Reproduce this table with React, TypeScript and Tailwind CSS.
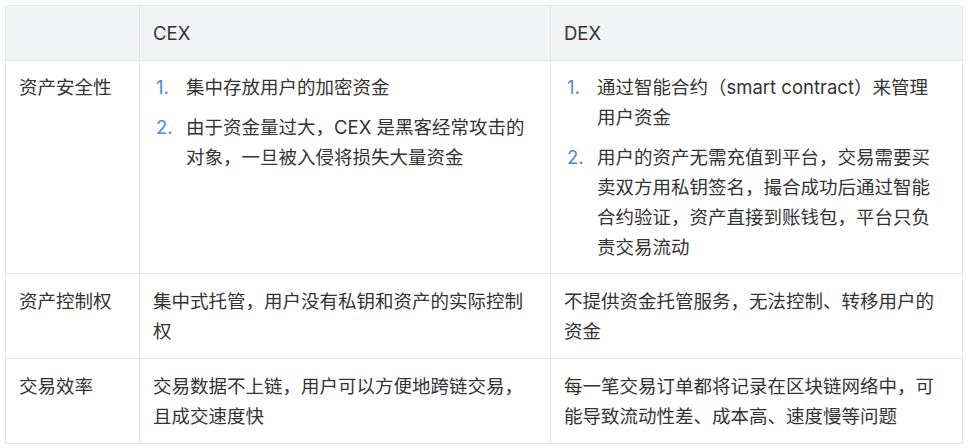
import React from "react";

const font = { fontFamily: '"Inter", "Noto Sans CJK SC", sans-serif' };

function Item({ n, children }: { n: number; children: React.ReactNode }) {
  return (
    <div className="flex">
      <span className="w-[33px] shrink-0 pl-[3px] text-[#4a87f0]">{n}.</span>
      <span className="flex-1 pr-[6px]">{children}</span>
    </div>
  );
}

export default function App() {
  const base = "border border-[#e3e5e9] px-[13px] text-left font-normal";
  const td = `${base} align-top`;
  const th = `${base} align-middle`;
  return (
    <div className="w-[972px] h-[447px] bg-white p-[5px] pr-[9px]" style={font}>
      <table className="w-full border-collapse text-[18.5px] leading-[30px] text-[#333333] table-fixed">
        <colgroup>
          <col className="w-[134px]" />
          <col className="w-[411px]" />
          <col />
        </colgroup>
        <thead>
          <tr className="bg-[#f2f3f5] h-[55px]">
            <th className={th}></th>
            <th className={th}>CEX</th>
            <th className={th}>DEX</th>
          </tr>
        </thead>
        <tbody>
          <tr>
            <td className={`${td} py-[11px]`}>资产安全性</td>
            <td className={`${td} py-[11px]`}>
              <div className="flex flex-col gap-[10px]">
                <Item n={1}>集中存放用户的加密资金</Item>
                <Item n={2}>由于资金量过大，CEX 是黑客经常攻击的对象，一旦被入侵将损失大量资金</Item>
              </div>
            </td>
            <td className={`${td} py-[11px]`}>
              <div className="flex flex-col gap-[10px]">
                <Item n={1}>通过智能合约（smart contract）来管理用户资金</Item>
                <Item n={2}>用户的资产无需充值到平台，交易需要买卖双方用私钥签名，撮合成功后通过智能合约验证，资产直接到账钱包，平台只负责交易流动</Item>
              </div>
            </td>
          </tr>
          <tr>
            <td className={`${td} py-[12px]`}>资产控制权</td>
            <td className={`${td} py-[12px]`}>集中式托管，用户没有私钥和资产的实际控制权</td>
            <td className={`${td} py-[12px]`}>不提供资金托管服务，无法控制、转移用户的资金</td>
          </tr>
          <tr>
            <td className={`${td} py-[12px]`}>交易效率</td>
            <td className={`${td} py-[12px]`}>交易数据不上链，用户可以方便地跨链交易，且成交速度快</td>
            <td className={`${td} py-[12px]`}>每一笔交易订单都将记录在区块链网络中，可能导致流动性差、成本高、速度慢等问题</td>
          </tr>
        </tbody>
      </table>
    </div>
  );
}
